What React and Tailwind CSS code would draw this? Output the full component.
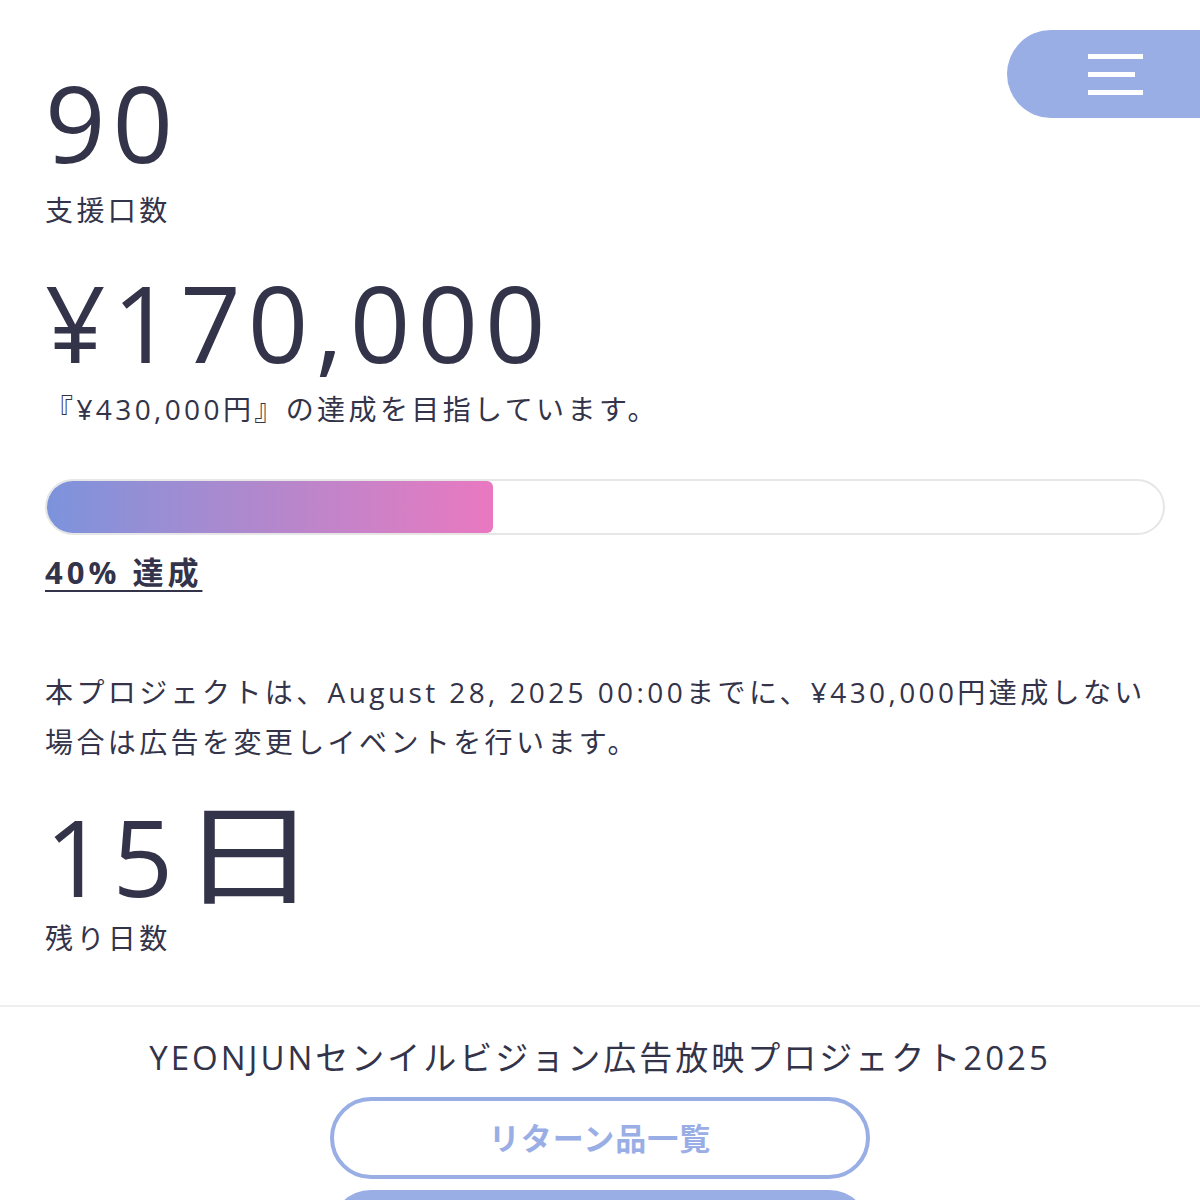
export default function App() {
  const font = { fontFamily: '"Open Sans", "Noto Sans CJK JP", sans-serif' };
  return (
    <div className="relative min-h-[1200px] bg-white text-[#33334a] overflow-hidden" style={font}>
      {/* Menu */}
      <button className="absolute top-[30px] left-[1007px] w-[240px] h-[88px] rounded-full bg-[#9aaee6] flex flex-col justify-center gap-[13px] pl-[81px]">
        <span className="block w-[55px] h-[5px] bg-white" />
        <span className="block w-[47px] h-[5px] bg-white" />
        <span className="block w-[55px] h-[5px] bg-white" />
      </button>

      <div className="pl-[45px] pr-[35px] pt-[69px]">
        <div className="text-[106px] leading-[106px] tracking-[7px]">90</div>
        <div className="mt-[20px] text-[28px] leading-[30px] tracking-[3.4px]">支援口数</div>

        <div className="mt-[44px] text-[106px] leading-[106px] tracking-[7px]">¥170,000</div>
        <div className="mt-[16px] text-[28px] leading-[36px] tracking-[3.4px]">『¥430,000円』の達成を目指しています。</div>

        <div className="mt-[52px] h-[56px] w-full rounded-full border-2 border-[#e6e6e6] overflow-hidden">
          <div className="h-full w-[40%] rounded-r-[6px] bg-gradient-to-r from-[#7b93dc] via-[#b387cc] to-[#e978c0]" />
        </div>
        <div className="mt-[17px] text-[31px] leading-[40px] font-bold tracking-[4px] underline underline-offset-[6px] decoration-[2px]">40% 達成</div>

        <div className="mt-[75px] text-[28px] leading-[50px] tracking-[3.4px]">
          本プロジェクトは、August 28, 2025 00:00までに、¥430,000円達成しない場合は広告を変更しイベントを行います。
        </div>

        <div className="mt-[30px] flex items-end text-[106px] leading-[106px] tracking-[7px]">
          <span>15</span>
          <span className="ml-0 inline-block origin-left scale-x-[1.25] text-[110px] leading-[112px]">日</span>
        </div>
        <div className="mt-[14px] text-[28px] leading-[30px] tracking-[3.4px]">残り日数</div>
      </div>

      <div className="mt-[52px] border-t-2 border-[#eeeeee]" />

      <div className="flex flex-col items-center">
        <div className="mt-[31px] text-[33px] leading-[40px] tracking-[3px]">YEONJUNセンイルビジョン広告放映プロジェクト2025</div>
        <button className="mt-[19px] w-[540px] h-[82px] rounded-full border-4 border-[#9aaee6] text-[#9aaee6] text-[31px] font-bold tracking-[1px]">
          リターン品一覧
        </button>
        <div className="mt-[11px] w-[540px] h-[82px] rounded-full bg-[#9aaee6]" />
      </div>
    </div>
  );
}
